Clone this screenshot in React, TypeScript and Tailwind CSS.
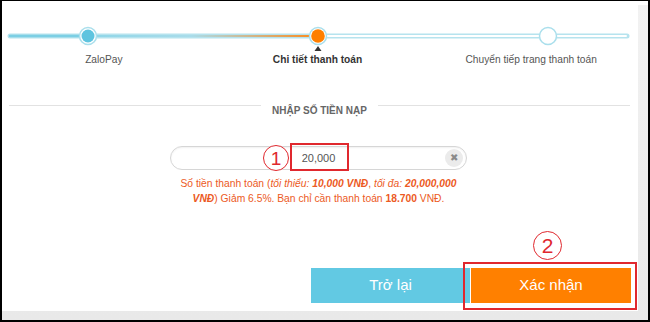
import React from "react";

const steps = [
  { label: "ZaloPay", active: false },
  { label: "Chi tiết thanh toán", active: true },
  { label: "Chuyển tiếp trang thanh toán", active: false },
];

function StepTrack() {
  return (
    <svg width="636" height="52" viewBox="0 0 636 52" className="block">
      <defs>
        <linearGradient id="mid" x1="86" y1="0" x2="316" y2="0" gradientUnits="userSpaceOnUse">
          <stop offset="0" stopColor="#8fd6e8" />
          <stop offset="0.45" stopColor="#a9dcea" />
          <stop offset="1" stopColor="#ff8a1a" />
        </linearGradient>
      </defs>
      {/* track */}
      <line x1="8" y1="35" x2="625" y2="35" stroke="#b6e3ee" strokeWidth="5" strokeLinecap="round" />
      <line x1="8" y1="35" x2="86" y2="35" stroke="#7ccfe4" strokeWidth="2.5" strokeLinecap="round" />
      <line x1="86" y1="35" x2="316" y2="35" stroke="url(#mid)" strokeWidth="2" />
      <line x1="316" y1="35" x2="624" y2="35" stroke="#ffffff" strokeWidth="2" strokeLinecap="round" />
      {/* nodes */}
      <circle cx="86" cy="35" r="8.5" fill="#ffffff" stroke="#aadfec" strokeWidth="1.5" />
      <circle cx="86" cy="35" r="6.5" fill="#5ec4df" />
      <circle cx="316" cy="35" r="8.5" fill="#ffffff" stroke="#aadfec" strokeWidth="1.5" />
      <circle cx="316" cy="35" r="6.8" fill="#ff7f00" />
      <circle cx="546" cy="35" r="8.5" fill="#ffffff" stroke="#aadfec" strokeWidth="1.5" />
      {/* pointer */}
      <polygon points="312.5,50 319.5,50 316,45" fill="#333333" />
    </svg>
  );
}

export default function App() {
  return (
    <div className="w-[650px] h-[322px] bg-black pt-px pl-[2px] pr-[2px] pb-[2px] font-['Liberation_Sans',Arial,sans-serif]">
      <div className="w-[646px] h-[319px] bg-gradient-to-b from-[#f2f2f2] to-[#e9e9e9] flex">
        <div className="w-[636px] h-[310px] bg-white flex flex-col">
          {/* Stepper */}
          <StepTrack />
          <div className="flex ml-[-5px] h-[13px]">
            {steps.map((s) => (
              <div
                key={s.label}
                className={`w-[214px] text-center text-[10.2px] leading-[13px] ${
                  s.active ? "font-bold text-[#333]" : "text-[#555]"
                }`}
              >
                {s.label}
              </div>
            ))}
          </div>

          {/* Section title */}
          <div className="flex items-start mt-[39px] pl-[7px] pr-[8px]">
            <div className="flex-1 h-px bg-[#e2e2e2]" />
            <span className="px-[11px] text-[10px] leading-[12px] font-bold text-[#666]">
              NHẬP SỐ TIỀN NẠP
            </span>
            <div className="flex-1 h-px bg-[#e2e2e2]" />
          </div>

          {/* Amount input */}
          <div className="flex justify-center mt-[29px] pr-[3px]">
            <div className="relative w-[297px] h-[24px] rounded-full border border-[#d6d6d6] shadow-[inset_0_1px_2px_rgba(0,0,0,0.06)] flex items-center justify-center">
              <span className="text-[11px] text-[#555]">20,000</span>
              <div className="absolute left-[274px] top-[2px] w-[18px] h-[18px] rounded-full bg-[#ebebeb] flex items-center justify-center text-[10px] leading-none text-[#8a8a8a]">
                ✖
              </div>
              {/* annotation 1 */}
              <div className="absolute left-[119px] top-[-4px] w-[59px] h-[28px] border-2 border-[#e0282e]" />
              <div className="absolute left-[92px] top-[-2px] w-[26px] h-[26px] rounded-full border border-[#e0282e] bg-white flex items-center justify-center text-[19px] leading-none text-[#e0282e]">
                1
              </div>
            </div>
          </div>

          {/* Hint */}
          <p className="mt-[6px] pr-[3px] text-center text-[10.3px] leading-[15px] text-[#ec5a24]">
            Số tiền thanh toán (<i>tối thiểu: </i>
            <b>
              <i>10,000 VNĐ</i>
            </b>
            , <i>tối đa: </i>
            <b>
              <i>20,000,000</i>
            </b>
            <br />
            <b>
              <i>VNĐ</i>
            </b>
            ) Giảm 6.5%. Bạn chỉ cần thanh toán <b>18.700</b> VNĐ.
          </p>

          {/* Actions */}
          <div className="flex justify-end gap-px mt-[62px] pr-[7px]">
            <button className="w-[159px] h-[35px] bg-[#62c9e3] text-white text-[15px]">Trở lại</button>
            <div className="relative">
              <button className="w-[160px] h-[35px] bg-[#ff8000] text-white text-[15px]">Xác nhận</button>
              {/* annotation 2 */}
              <div className="absolute left-[-8px] top-[-6px] w-[174px] h-[48px] border-2 border-[#e0282e]" />
              <div className="absolute left-[62px] top-[-37px] w-[29px] h-[29px] rounded-full border border-[#e0282e] bg-white flex items-center justify-center text-[21px] leading-none text-[#e0282e]">
                2
              </div>
            </div>
          </div>
        </div>
        <div className="flex-1 flex flex-col">
          <div className="h-[4px] bg-white" />
        </div>
      </div>
    </div>
  );
}
